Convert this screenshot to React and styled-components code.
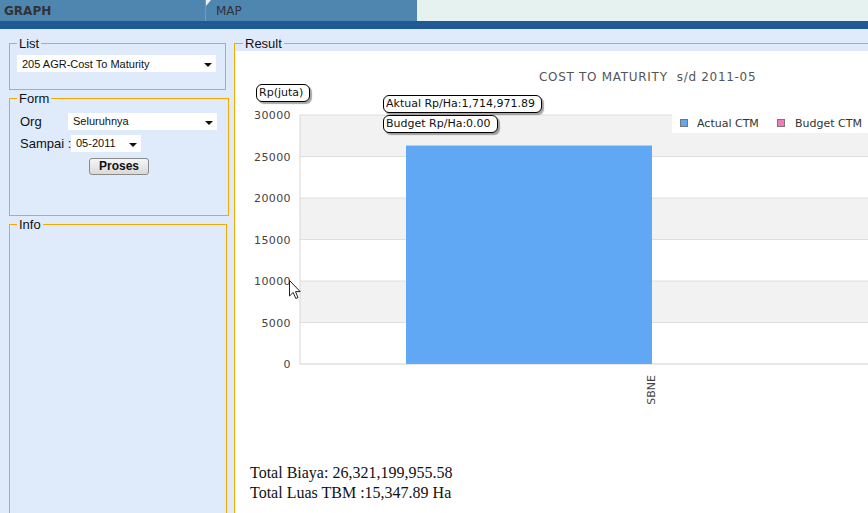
import React from 'react'
import styled, { createGlobalStyle } from 'styled-components'

const GlobalStyle = createGlobalStyle`
    html, body {
        margin: 0;
        padding: 0;
        overflow: hidden;
        background: #dfeafb;
        font-family: "Liberation Sans", Arial, sans-serif;
    }
`

const ORANGE = '#f6a800'

const ticks = [30000, 25000, 20000, 15000, 10000, 5000, 0]
const PLOT = { x0: 300, x1: 890, top: 115, bottom: 364 }
const yOf = (v) => PLOT.bottom - (v / 30000) * (PLOT.bottom - PLOT.top)

function Select({ value, width }) {
    return (
        <SelectBox $width={width}>
            <span>{value}</span>
            <Arrow />
        </SelectBox>
    )
}

function Chart() {
    const barTop = yOf(26321)
    return (
        <ChartWrap>
            <svg width="650" height="400" viewBox="235 51 650 400">
                <text x="539" y="81" fontSize="12" fill="#555" letterSpacing="0.7">
                    {'COST TO MATURITY  s/d 2011-05'}
                </text>

                {ticks.slice(0, -1).map((t, i) => i % 2 === 0 && (
                    <rect key={t} x={PLOT.x0} y={yOf(t)} width={PLOT.x1 - PLOT.x0}
                        height={yOf(t - 5000) - yOf(t)} fill="#f2f2f2" />
                ))}
                {ticks.map(t => (
                    <line key={t} x1={PLOT.x0} x2={PLOT.x1} y1={yOf(t)} y2={yOf(t)}
                        stroke={t === 0 ? '#d0d0d0' : '#dedede'} strokeWidth="1" />
                ))}
                <line x1={PLOT.x0} x2={PLOT.x0} y1={PLOT.top} y2={PLOT.bottom} stroke="#d6d6d6" />

                {ticks.map(t => (
                    <text key={t} x="291" y={yOf(t) + 4} fontSize="11" fill="#444" textAnchor="end"
                        letterSpacing="0.4">{t}</text>
                ))}

                <rect x="406" y={barTop} width="246" height={PLOT.bottom - barTop} fill="#60a8f3" />

                <text transform="translate(655 375) rotate(-90)" fontSize="11" fill="#444"
                    textAnchor="end">SBNE</text>

                <rect x="672" y="113" width="220" height="20" fill="#fff" />
                <rect x="680.5" y="119.5" width="7" height="7" fill="#60a8f3" stroke="#777" />
                <text x="697" y="127" fontSize="11" fill="#333">Actual CTM</text>
                <rect x="777.5" y="119.5" width="7" height="7" fill="#f07cbc" stroke="#777" />
                <text x="795" y="127" fontSize="11" fill="#333">Budget CTM</text>
            </svg>

            <Bubble $left={21} $top={33}>Rp(juta)</Bubble>
            <Bubble $left={148} $top={44}>Aktual Rp/Ha:1,714,971.89</Bubble>
            <Bubble $left={148} $top={64}>Budget Rp/Ha:0.00</Bubble>

            <Cursor width="12" height="20" viewBox="0 0 12 20">
                <path d="M0.5 0.5 L0.5 16 L4.2 12.4 L6.8 18.5 L9 17.5 L6.5 11.6 L11.2 11.6 Z"
                    fill="#fff" stroke="#222" strokeWidth="1" strokeLinejoin="round" />
            </Cursor>
        </ChartWrap>
    )
}

export default function App() {
    return (
        <Page>
            <GlobalStyle />
            <TabBar>
                <Tab $active $width={205}>GRAPH</Tab>
                <Tab $width={212} $notch>MAP</Tab>
                <TabRest />
            </TabBar>
            <Strip />

            <Main>
                <Side>
                    <Panel $height={54} $width={217}>
                        <legend>List</legend>
                        <Select value="205 AGR-Cost To Maturity" width={199} />
                    </Panel>

                    <Panel $height={125} $width={220}>
                        <legend>Form</legend>
                        <FormRow>
                            <Label $width={51}>Org</Label>
                            <Select value="Seluruhnya" width={149} />
                        </FormRow>
                        <FormRow>
                            <Label $width={54}>Sampai :</Label>
                            <Select value="05-2011" width={70} />
                        </FormRow>
                        <ButtonRow>
                            <Button>Proses</Button>
                        </ButtonRow>
                    </Panel>

                    <Panel $height={320} $width={218}>
                        <legend>Info</legend>
                    </Panel>
                </Side>

                <Result>
                    <legend>Result</legend>
                    <Chart />
                    <Totals>
                        <div>Total Biaya: 26,321,199,955.58</div>
                        <div>Total Luas TBM :15,347.89 Ha</div>
                    </Totals>
                </Result>
            </Main>
        </Page>
    )
}

const Page = styled.div`
    width: 868px;
    height: 513px;
    overflow: hidden;
    background: #dfeafb;
`

const TabBar = styled.div`
    display: flex;
    height: 21px;
`

const Tab = styled.div`
    position: relative;
    width: ${p => p.$width}px;
    background: #4f86b0;
    color: #2f3338;
    font-family: "DejaVu Sans", Tahoma, sans-serif;
    font-size: 12px;
    font-weight: ${p => p.$active ? 'bold' : 'normal'};
    line-height: 23px;
    padding-left: ${p => p.$active ? 4 : 10}px;
    box-sizing: border-box;
    border-left: ${p => p.$notch ? '1px solid #6e9cc0' : 'none'};

    ${p => p.$notch && `
        &::before {
            content: '';
            position: absolute;
            left: 0;
            top: 0;
            border-top: 6px solid #e8f0f4;
            border-right: 5px solid transparent;
        }
    `}
`

const TabRest = styled.div`
    flex: 1;
    background: #e5f2f0;
`

const Strip = styled.div`
    height: 8px;
    background: #1f5a96;
`

const Main = styled.div`
    display: flex;
    align-items: flex-start;
    padding-top: 7px;
`

const Side = styled.div`
    display: flex;
    flex-direction: column;
    gap: 1px;
    margin-left: 9px;
    width: 220px;
`

const Panel = styled.fieldset`
    box-sizing: border-box;
    width: ${p => p.$width}px;
    height: ${p => p.$height}px;
    margin: 0;
    padding: 4px 7px 0;
    border: 1px solid ${ORANGE};
    min-width: 0;

    legend {
        padding: 0 2px;
        font-size: 13px;
        line-height: 15px;
        color: #111;
    }
`

const SelectBox = styled.div`
    box-sizing: border-box;
    width: ${p => p.$width}px;
    height: 17px;
    background: #fff;
    display: flex;
    align-items: center;
    justify-content: space-between;
    padding: 0 4px 0 5px;
    font-size: 11px;
    color: #111;
`

const Arrow = styled.span`
    width: 0;
    height: 0;
    margin-top: 3px;
    border-left: 4px solid transparent;
    border-right: 4px solid transparent;
    border-top: 4px solid #111;
`

const FormRow = styled.div`
    display: flex;
    align-items: center;
    margin-top: 4px;
    height: 18px;

    &:first-of-type {
        margin-top: 2px;
    }
`

const Label = styled.span`
    box-sizing: border-box;
    width: ${p => p.$width}px;
    font-size: 13px;
    color: #111;
    flex-shrink: 0;
    padding-left: 3px;
    white-space: nowrap;
`

const ButtonRow = styled.div`
    padding-left: 72px;
    margin-top: 4px;
`

const Button = styled.button`
    box-sizing: border-box;
    width: 60px;
    height: 17px;
    padding: 0;
    font-family: "Liberation Sans", Arial, sans-serif;
    font-size: 12px;
    font-weight: bold;
    color: #111;
    background: linear-gradient(#f6f6f6, #d9d9d9);
    border: 1px solid #8a8a8a;
    border-radius: 3px;
`

const Result = styled.fieldset`
    box-sizing: border-box;
    width: 660px;
    height: 490px;
    margin: 0 0 0 5px;
    padding: 0;
    border: 1px solid ${ORANGE};
    border-right: none;
    background: linear-gradient(#dfeafb 7px, #fff 7px);
    min-width: 0;

    legend {
        margin-left: 8px;
        padding: 0 2px;
        font-size: 13px;
        line-height: 15px;
        color: #111;
    }
`

const ChartWrap = styled.div`
    position: relative;
    width: 650px;
    height: 400px;

    svg {
        display: block;
        font-family: "DejaVu Sans", sans-serif;
    }

    text {
        white-space: pre;
    }
`

const Bubble = styled.div`
    position: absolute;
    left: ${p => p.$left}px;
    top: ${p => p.$top}px;
    padding: 1px 6px 1px 2px;
    border: 1.5px solid #000;
    border-radius: 6px;
    background: #fff;
    box-shadow: 2px 2px 1px rgba(0, 0, 0, 0.35);
    font-family: "DejaVu Sans", sans-serif;
    font-size: 11px;
    line-height: 14px;
    color: #111;
    white-space: nowrap;
`

const Cursor = styled.svg`
    position: absolute;
    left: 54px;
    top: 229px;
`

const Totals = styled.div`
    padding-left: 15px;
    margin-top: 12px;
    font-family: "Liberation Serif", "Times New Roman", serif;
    font-size: 16px;
    line-height: 20px;
    color: #111;
`
